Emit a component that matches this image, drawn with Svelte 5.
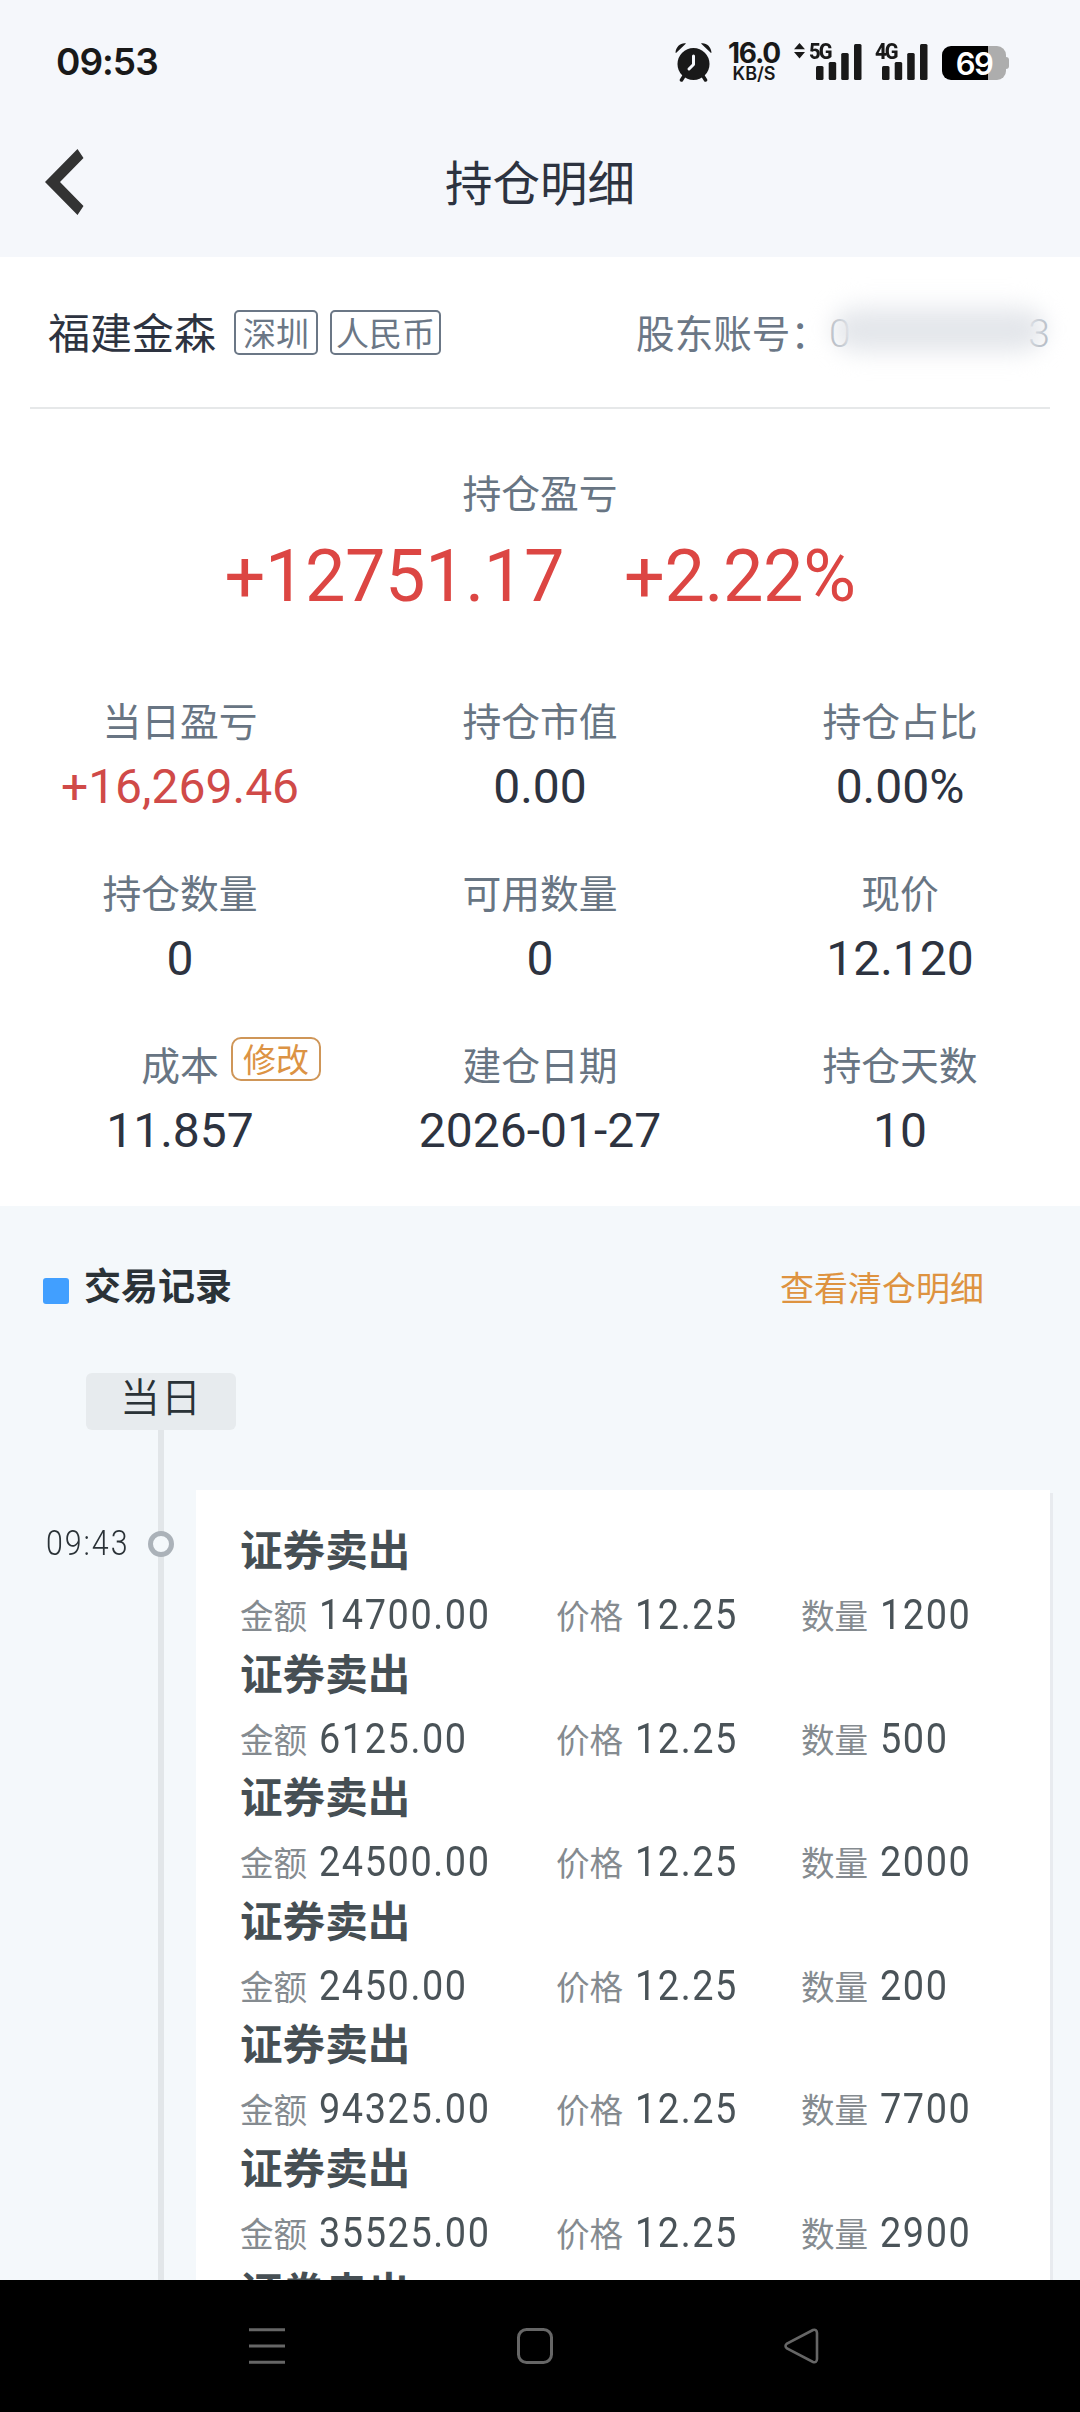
<script lang="ts">
	interface Stat {
		label: string;
		value: string;
		up?: boolean;
		editable?: boolean;
	}

	interface Trade {
		amount: string;
		price: string;
		count: string;
	}

	const stats: Stat[] = [
		{ label: '当日盈亏', value: '+16,269.46', up: true },
		{ label: '持仓市值', value: '0.00' },
		{ label: '持仓占比', value: '0.00%' },
		{ label: '持仓数量', value: '0' },
		{ label: '可用数量', value: '0' },
		{ label: '现价', value: '12.120' },
		{ label: '成本', value: '11.857', editable: true },
		{ label: '建仓日期', value: '2026-01-27' },
		{ label: '持仓天数', value: '10' }
	];

	const trades: Trade[] = [
		{ amount: '14700.00', price: '12.25', count: '1200' },
		{ amount: '6125.00', price: '12.25', count: '500' },
		{ amount: '24500.00', price: '12.25', count: '2000' },
		{ amount: '2450.00', price: '12.25', count: '200' },
		{ amount: '94325.00', price: '12.25', count: '7700' },
		{ amount: '35525.00', price: '12.25', count: '2900' }
	];
</script>

{#snippet signal(name: string)}
	<div class="signal">
		<span class="net">{name}</span>
		<svg class="bars" width="46" height="38" viewBox="0 0 46 38">
			<rect x="0" y="23" width="7.5" height="14" rx="1.5" />
			<rect x="12.7" y="19" width="7.5" height="18" rx="1.5" />
			<rect x="25.2" y="10" width="7.5" height="27" rx="1.5" />
			<rect x="38" y="1" width="7.5" height="36" rx="1.5" />
		</svg>
	</div>
{/snippet}

<div class="phone">
	<header>
		<div class="status">
			<span class="clock">09:53</span>
			<div class="status-icons">
				<svg class="alarm" width="37" height="39" viewBox="0 0 37 39">
					<circle cx="18.5" cy="21" r="16" fill="#191919" />
					<path d="M.5 9.5 C1 3.5 6 -.5 11 .5 L1 10Z M36.5 9.5 C36 3.5 31 -.5 26 .5 L36 10Z" fill="#191919" />
					<path d="M9 33 L6.5 37 M28 33 L30.5 37" stroke="#191919" stroke-width="3.5" stroke-linecap="round" />
					<path d="M18.5 13 V21.5 L14 26" fill="none" stroke="#f5f7fb" stroke-width="3" stroke-linecap="round" stroke-linejoin="round" />
				</svg>
				<div class="speed">
					<b>16.0</b>
					<small>KB/S</small>
				</div>
				<svg class="updown" width="11" height="16" viewBox="0 0 11 16">
					<path d="M5.5 0 L11 6.3 H0Z M5.5 15.5 L11 9 H0Z" fill="#191919" />
				</svg>
				{@render signal('5G')}
				{@render signal('4G')}
				<div class="battery"><span>69</span></div>
			</div>
		</div>
		<div class="nav-title">
			<svg class="back" width="39" height="67" viewBox="0 0 39 67">
				<path d="M32.5 0 L38.5 9 L15 33 L38.5 57 L32.5 66 L0 33Z" fill="#333" />
			</svg>
			<h1>持仓明细</h1>
		</div>
	</header>

	<section class="position">
		<div class="stock">
			<span class="name">福建金森</span>
			<span class="tag">深圳</span>
			<span class="tag wide">人民币</span>
			<span class="account">股东账号：</span>
			<span class="masked"><i>0</i><i>3</i></span>
		</div>

		<div class="profit">
			<div class="label">持仓盈亏</div>
			<div class="profit-value">
				<span>+12751.17</span>
				<span>+2.22%</span>
			</div>
		</div>

		<div class="stats">
			{#each stats as stat (stat.label)}
				<div class="stat">
					<div class="label">
						<span>{stat.label}</span>
						{#if stat.editable}
							<span class="edit">修改</span>
						{/if}
					</div>
					<div class="value" class:up={stat.up}>{stat.value}</div>
				</div>
			{/each}
		</div>
	</section>

	<section class="records">
		<div class="records-head">
			<span class="square"></span>
			<h2>交易记录</h2>
			<span class="more">查看清仓明细</span>
		</div>

		<div class="day">当日</div>

		<div class="timeline">
			<div class="time"><span>09:43</span></div>
			<div class="axis"><span class="dot"></span></div>
			<div class="card">
				{#each trades as trade}
					<div class="trade">
						<h3>证券卖出</h3>
						<div class="detail">
							<div><span>金额</span><b>{trade.amount}</b></div>
							<div><span>价格</span><b>{trade.price}</b></div>
							<div><span>数量</span><b>{trade.count}</b></div>
						</div>
					</div>
				{/each}
				<div class="trade"><h3>证券卖出</h3></div>
			</div>
		</div>
	</section>

	<footer>
		<svg width="36" height="36" viewBox="0 0 36 36">
			<path d="M0 1.7 H36 M0 18 H36 M0 34.3 H36" stroke="#666" stroke-width="3" />
		</svg>
		<svg width="36" height="36" viewBox="0 0 36 36">
			<rect x="1.5" y="1.5" width="33" height="33" rx="8" fill="none" stroke="#666" stroke-width="3" />
		</svg>
		<svg width="36" height="36" viewBox="0 0 36 36">
			<path
				d="M29 2 L3 15.5 Q0 18 3 20.5 L29 34 Q32.8 35 33 31 V5 Q32.8 1 29 2Z"
				fill="none"
				stroke="#666"
				stroke-width="2.6"
			/>
		</svg>
	</footer>
</div>

<style>
	:global(body) {
		background: #000;
	}

	.phone {
		width: 1080px;
		height: 2412px;
		display: flex;
		flex-direction: column;
		overflow: hidden;
		background: #fff;
		font-family: Roboto, 'Noto Sans CJK SC', sans-serif;
		color: #2d3340;
	}

	h1,
	h2,
	h3 {
		margin: 0;
	}

	svg {
		display: block;
	}

	/* 状态栏 */
	header {
		height: 257px;
		flex: none;
		background: #f5f7fb;
	}

	.status {
		height: 124px;
		display: flex;
		justify-content: space-between;
		padding: 0 74px 0 56px;
		color: #191919;
		font-family: Inter, sans-serif;
	}

	.clock {
		font-size: 37px;
		font-weight: 600;
		line-height: 124px;
		letter-spacing: -1px;
	}

	.status-icons {
		display: flex;
		align-items: flex-start;
		padding-top: 43px;
	}

	.speed {
		width: 56px;
		margin: 0 12px 0 14px;
		display: flex;
		flex-direction: column;
		align-items: center;
	}

	.speed b {
		font-size: 28px;
		font-weight: 700;
		line-height: 21px;
		letter-spacing: -1.2px;
	}

	.speed small {
		font-size: 18px;
		font-weight: 600;
		line-height: 18px;
		padding-top: 1px;
	}

	.signal {
		width: 53px;
		height: 38px;
		margin: 0 9px 0 4px;
		position: relative;
		display: flex;
		justify-content: flex-end;
	}

	.net {
		position: absolute;
		left: 0;
		top: 0;
		font-family: Roboto, sans-serif;
		font-size: 22px;
		font-weight: 800;
		line-height: 17px;
		letter-spacing: -2px;
		transform: scaleX(0.92);
		transform-origin: left;
	}

	.bars {
		fill: #191919;
	}

	.battery {
		width: 64px;
		height: 34px;
		margin: 3px 0 0 5px;
		border-radius: 9px;
		background: linear-gradient(90deg, #000 46px, #adadad 46px);
		position: relative;
		text-align: center;
	}

	.battery::after {
		content: '';
		position: absolute;
		right: -3px;
		top: 11px;
		width: 4px;
		height: 12px;
		border-radius: 0 3px 3px 0;
		background: #adadad;
	}

	.battery span {
		color: #fff;
		font-size: 31px;
		font-weight: 600;
		line-height: 35px;
		letter-spacing: -1.5px;
	}

	.nav-title {
		display: grid;
		grid-template-columns: 200px 1fr 200px;
		height: 117px;
		align-items: center;
	}

	.back {
		margin-left: 45px;
	}

	h1 {
		padding-top: 4px;
		font-size: 47.5px;
		font-weight: 400;
		line-height: 60px;
		text-align: center;
	}

	/* 股票信息 */
	.position {
		height: 949px;
		flex: none;
	}

	.stock {
		height: 150px;
		margin: 0 30px;
		padding: 0 0 0 18px;
		display: flex;
		align-items: center;
		border-bottom: 2px solid #e6e8e9;
	}

	.name {
		width: 186px;
		padding-top: 6px;
		font-size: 42px;
		line-height: 50px;
	}

	.tag {
		box-sizing: border-box;
		width: 84px;
		height: 45px;
		margin: 1px 12px 0 0;
		border: 2px solid #6b7786;
		border-radius: 5px;
		color: #6b7786;
		font-size: 33px;
		line-height: 45px;
		text-align: center;
		white-space: nowrap;
	}

	.tag.wide {
		width: 111px;
	}

	.account {
		margin-left: auto;
		color: #6b7786;
		font-size: 38.6px;
		line-height: 50px;
		padding-top: 5px;
		white-space: nowrap;
	}

	.masked {
		width: 221px;
		display: flex;
		justify-content: space-between;
		position: relative;
		padding-top: 4px;
		font-size: 39px;
		line-height: 46px;
		color: #a9b0ba;
	}

	.masked i {
		font-style: normal;
		font-weight: 300;
	}

	.masked::after {
		content: '';
		position: absolute;
		left: 4px;
		right: 5px;
		top: -3px;
		height: 50px;
		border-radius: 25px;
		background: linear-gradient(#f1f2f5, #e0e3e8 50%, #eceef1);
		filter: blur(11px);
	}

	.label {
		color: #687583;
		font-size: 38.8px;
		line-height: 50px;
		text-align: center;
	}

	.profit {
		padding-top: 61px;
	}

	.profit-value {
		display: flex;
		justify-content: center;
		gap: 60px;
		padding-top: 15px;
		color: #dc4643;
		font-size: 72px;
		line-height: 84px;
		letter-spacing: -0.4px;
	}

	.stats {
		display: grid;
		grid-template-columns: repeat(3, 360px);
		grid-auto-rows: 172px;
		padding-top: 79px;
	}

	.stat .label {
		position: relative;
	}

	.edit {
		box-sizing: border-box;
		position: absolute;
		left: 231px;
		top: -5px;
		width: 90px;
		height: 44px;
		border: 2px solid #cf9658;
		border-radius: 10px;
		color: #dc9344;
		font-size: 33px;
		line-height: 43px;
	}

	.value {
		padding-top: 10px;
		font-size: 48px;
		line-height: 58px;
		text-align: center;
	}

	.value.up {
		color: #d04a48;
	}

	/* 交易记录 */
	.records {
		flex: 1;
		min-height: 0;
		overflow: hidden;
		display: flex;
		flex-direction: column;
		background: #f4f8fb;
	}

	.records-head {
		height: 167px;
		flex: none;
		display: flex;
		align-items: center;
		padding: 0 96px 0 43px;
		box-sizing: border-box;
	}

	.square {
		width: 26px;
		height: 26px;
		margin-top: 3px;
		border-radius: 3px;
		background: #419fff;
	}

	h2 {
		margin: 0 auto 4px 15px;
		color: #2a3237;
		font-size: 37px;
		font-weight: 700;
		line-height: 46px;
	}

	.more {
		color: #de9340;
		font-size: 34px;
		line-height: 44px;
		margin-bottom: 1px;
	}

	.day {
		width: 150px;
		height: 57px;
		flex: none;
		margin-left: 86px;
		border-radius: 6px;
		background: #e7ebee;
		color: #2a3237;
		font-size: 40px;
		font-weight: 350;
		line-height: 51px;
		text-align: center;
		letter-spacing: 1px;
	}

	.timeline {
		flex: 1;
		min-height: 0;
		display: flex;
	}

	.time {
		width: 158px;
		box-sizing: border-box;
		padding: 93px 0 0 46px;
		color: #2a3237;
		font-size: 34.5px;
		font-weight: 350;
		line-height: 40px;
	}

	/* 数字压窄，接近 DIN 字形 */
	.time span {
		display: inline-block;
		transform: scaleX(0.88);
		transform-origin: left;
		letter-spacing: 2.2px;
	}

	.axis {
		width: 6px;
		background: #e2e6e9;
		display: flex;
		justify-content: center;
	}

	.dot {
		box-sizing: border-box;
		flex: none;
		width: 26px;
		height: 26px;
		margin-top: 101px;
		border: 5px solid #abb2b9;
		border-radius: 50%;
		background: #f4f8fb;
	}

	.card {
		width: 854px;
		box-sizing: border-box;
		margin: 60px 0 0 32px;
		padding: 33px 0 0 44px;
		background: #fff;
		box-shadow: 3px 3px 0 #e8ebef;
	}

	.trade {
		height: 123.6px;
	}

	h3 {
		color: #464f54;
		font-size: 42.6px;
		font-weight: 700;
		line-height: 56px;
	}

	.detail {
		display: grid;
		grid-template-columns: 316px 245px 1fr;
		padding-top: 10px;
		line-height: 50px;
	}

	.detail div {
		display: flex;
		align-items: baseline;
	}

	.detail span {
		width: 79px;
		color: #858b90;
		font-size: 33.6px;
	}

	.detail b {
		color: #4a5358;
		font-size: 43px;
		font-weight: 400;
		letter-spacing: 1.8px;
		transform: scaleX(0.88);
		transform-origin: left;
	}

	/* 系统导航栏 */
	footer {
		height: 132px;
		flex: none;
		display: flex;
		justify-content: space-between;
		box-sizing: border-box;
		padding: 48px 260px 0 249px;
		background: #000;
	}
</style>
